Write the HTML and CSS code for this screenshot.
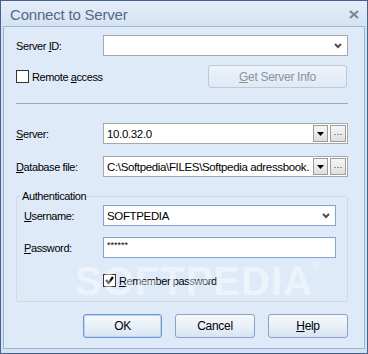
FILE: index.html
```html
<!DOCTYPE html>
<html lang="en">
<head>
  <meta charset="UTF-8">
  <title>Connect to Server</title>
  <link rel="stylesheet" href="styles.css">
</head>
<body>
  <div class="window">
    <div class="titlebar">
      <span class="title">Connect to Server</span>
      <svg class="close" width="10" height="9" viewBox="0 0 10 9">
        <path d="M1 1 L9 8 M9 1 L1 8" stroke="#7b8796" stroke-width="2.2" fill="none"/>
      </svg>
    </div>

    <div class="client">
      <div class="row">
        <span class="lbl">Server <u>I</u>D:</span>
        <div class="combo">
          <span class="val"></span>
          <svg class="chev" width="8" height="6" viewBox="0 0 8 6"><path d="M1 1 L4 4 L7 1" stroke="#505050" stroke-width="2" fill="none"/></svg>
        </div>
      </div>

      <div class="row row-check">
        <div class="check"><span class="box"></span><span>Remote <u>a</u>ccess</span></div>
        <button class="btn btn-info" type="button" disabled><u>G</u>et Server Info</button>
      </div>

      <div class="sep"></div>

      <div class="row row-server">
        <span class="lbl"><u>S</u>erver:</span>
        <div class="combo combo-ext">
          <span class="val">10.0.32.0</span>
          <span class="dd"><svg width="7" height="4" viewBox="0 0 7 4"><path d="M0 0 H7 L3.5 4 Z" fill="#000"/></svg></span>
          <span class="ell">···</span>
        </div>
      </div>

      <div class="row row-db">
        <span class="lbl"><u>D</u>atabase file:</span>
        <div class="combo combo-ext">
          <span class="val">C:\Softpedia\FILES\Softpedia adressbook.</span>
          <span class="dd"><svg width="7" height="4" viewBox="0 0 7 4"><path d="M0 0 H7 L3.5 4 Z" fill="#000"/></svg></span>
          <span class="ell">···</span>
        </div>
      </div>

      <fieldset class="group">
        <legend>Authentication</legend>
        <div class="row">
          <span class="lbl lbl-in"><u>U</u>sername:</span>
          <div class="combo combo-blue">
            <span class="val">SOFTPEDIA</span>
            <svg class="chev" width="8" height="6" viewBox="0 0 8 6"><path d="M1 1 L4 4 L7 1" stroke="#505050" stroke-width="2" fill="none"/></svg>
          </div>
        </div>
        <div class="row row-pw">
          <span class="lbl lbl-in"><u>P</u>assword:</span>
          <div class="combo combo-blue">
            <span class="val pw">******</span>
          </div>
        </div>
        <div class="row-remember">
          <div class="check">
            <span class="box">
              <svg width="11" height="11" viewBox="0 0 11 11"><path d="M2 5 L4.5 8 L9 2" stroke="#000" stroke-width="2.2" fill="none"/></svg>
            </span>
            <span><u>R</u>emember password</span>
          </div>
        </div>
      </fieldset>

      <div class="buttons">
        <button class="btn btn-default" type="button">OK</button>
        <button class="btn" type="button">Cancel</button>
        <button class="btn" type="button"><u>H</u>elp</button>
      </div>
    </div>

    <div class="watermark">SOFTPEDIA<sup>®</sup></div>
  </div>
</body>
</html>
```

FILE: styles.css
```css
* {
  box-sizing: border-box;
}
body {
  margin: 0;
  font-family: 'Liberation Sans', Arial, sans-serif;
  font-size: 11px;
  letter-spacing: -0.4px;
  color: #000;
}
u {
  text-decoration: underline;
  text-underline-offset: 1px;
}

.window {
  position: relative;
  width: 368px;
  height: 354px;
  border: 1px solid #44628a;
  background: #d4e1f2;
  padding: 0 2px 4px 2px;
  display: flex;
  flex-direction: column;
  overflow: hidden;
}

/* 타이틀바 */
.titlebar {
  height: 25px;
  margin: 0 -2px;
  padding: 0 8px 0 9px;
  background: linear-gradient(#e4edf9 0%, #d6e3f3 100%);
  display: flex;
  align-items: center;
  justify-content: space-between;
}
.title {
  font-size: 15px;
  letter-spacing: -0.2px;
  color: #52698a;
  padding-top: 1px;
}
.close {
  margin-top: 1px;
}

.client {
  flex: 1;
  border: 1px solid #9ab5da;
  background: #dfeaf9;
  padding: 8px 16px 0 12px;
}

.row {
  display: flex;
  align-items: center;
  height: 21px;
}
.lbl {
  width: 87px;
  flex-shrink: 0;
}
.lbl-in {
  width: 79px;
}

.combo {
  flex: 1;
  height: 21px;
  border: 1px solid #a5a7aa;
  background: #fff;
  display: flex;
  align-items: center;
  padding-left: 3px;
  min-width: 0;
}
.combo .val {
  flex: 1;
  min-width: 0;
  white-space: nowrap;
  overflow: hidden;
  font-size: 11.5px;
  letter-spacing: -0.35px;
}
.chev {
  margin-right: 5px;
}
.combo-blue {
  border-color: #7fa5d6;
}
.val.pw {
  font-size: 9px;
  letter-spacing: 0;
  padding-bottom: 5px;
}

.combo-ext {
  padding-right: 1px;
}
.combo-ext .dd,
.combo-ext .ell {
  flex-shrink: 0;
  height: 17px;
  border: 1px solid #9c9c9c;
  background: linear-gradient(#f7f7f7, #dedede);
  display: flex;
  align-items: center;
  justify-content: center;
}
.combo-ext .dd {
  width: 15px;
  margin: 0 2px 0 1px;
}
.combo-ext .ell {
  width: 16px;
  font-size: 9px;
  letter-spacing: 0;
  color: #333;
}

.row-check {
  margin-top: 9px;
  height: 23px;
  justify-content: space-between;
  padding-right: 1px;
}
.check {
  display: flex;
  align-items: center;
}
.box {
  width: 13px;
  height: 13px;
  border: 1px solid #333;
  background: #fff;
  margin-right: 3px;
  display: flex;
  align-items: center;
  justify-content: center;
}

.sep {
  margin-top: 15px;
  height: 1px;
  background: #a2a6ac;
}
.row-server {
  margin-top: 19px;
}
.row-db {
  margin-top: 12px;
}

/* 인증 그룹 */
.group {
  margin: 12px 0 0 0;
  padding: 2px 11px 13px 7px;
  border: 1px solid #d3d8df;
  border-radius: 2px;
}
.group legend {
  padding: 0 1px;
  margin-left: -3px;
  line-height: 14px;
}
.row-pw {
  margin-top: 11px;
}
.row-remember {
  margin-top: 16px;
  padding-left: 79px;
  height: 14px;
}

/* 버튼 */
.btn {
  font-family: inherit;
  font-size: 12px;
  letter-spacing: -0.3px;
  color: #000;
  height: 24px;
  width: 80px;
  border: 1px solid #8aa3c2;
  border-radius: 3px;
  background: linear-gradient(#f6f9fd 0%, #e9f0f9 50%, #d8e4f3 100%);
  padding: 0;
}
.btn-info {
  width: 139px;
  height: 23px;
  color: #8a939d;
  border-color: #b9c8dc;
  background: linear-gradient(#eef3fa, #dfe8f4);
}
.btn-default {
  width: 79px;
  border-color: #6d99d2;
  box-shadow: inset 0 0 0 1px #b9d3f4;
}
.buttons {
  margin-top: 12px;
  display: flex;
  justify-content: flex-end;
  gap: 13px;
}

.watermark {
  position: absolute;
  left: 74px;
  top: 258px;
  font-size: 40px;
  font-weight: bold;
  letter-spacing: 1px;
  color: rgba(255, 255, 255, 0.45);
  pointer-events: none;
}
.watermark sup {
  font-size: 10px;
  vertical-align: 26px;
}
```
